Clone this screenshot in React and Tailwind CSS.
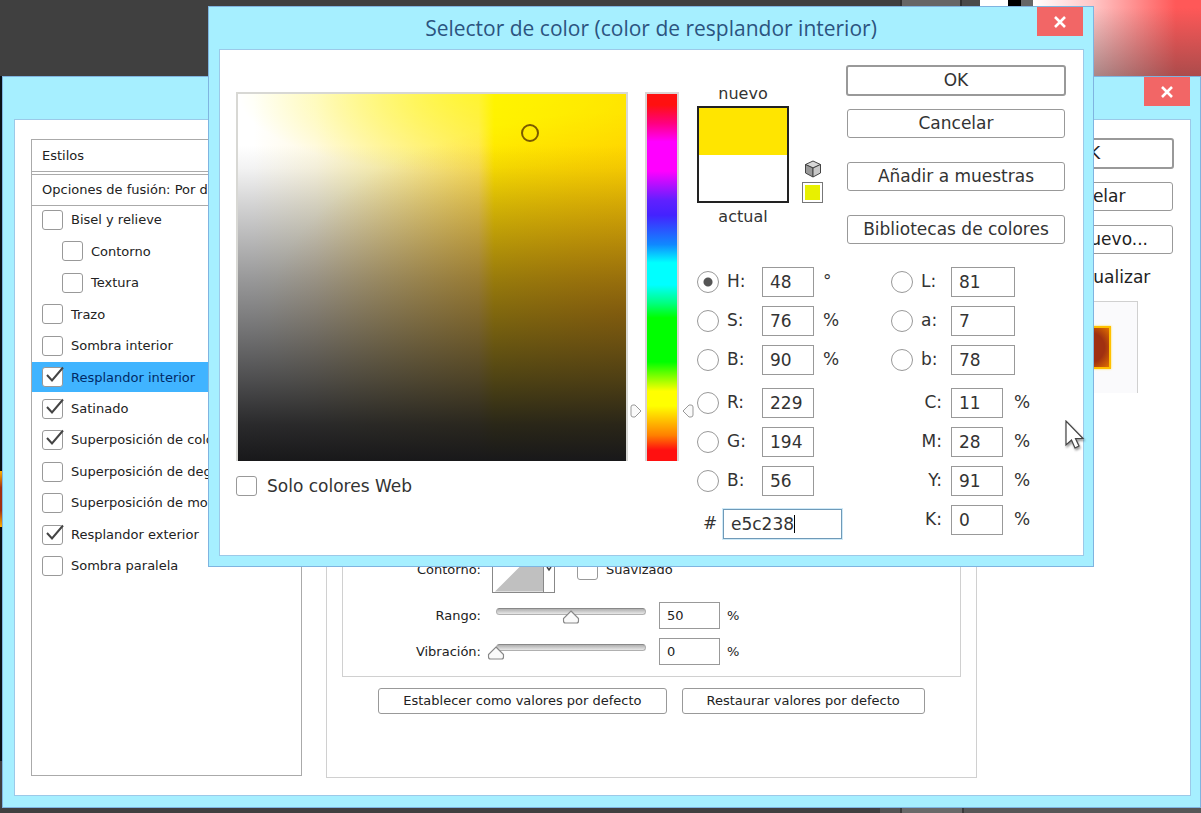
import { useState } from "react"

const STYLES = [
  { name: "Bisel y relieve" },
  { name: "Contorno", nested: true },
  { name: "Textura", nested: true },
  { name: "Trazo" },
  { name: "Sombra interior" },
  { name: "Resplandor interior", on: true, selected: true },
  { name: "Satinado", on: true },
  { name: "Superposición de colores", on: true },
  { name: "Superposición de degradado" },
  { name: "Superposición de motivo" },
  { name: "Resplandor exterior", on: true },
  { name: "Sombra paralela" },
]

const HSB = [
  { id: "hue", label: "H:", value: "48", unit: "°" },
  { id: "sat", label: "S:", value: "76", unit: "%" },
  { id: "bri", label: "B:", value: "90", unit: "%" },
]
const RGB = [
  { id: "red", label: "R:", value: "229" },
  { id: "green", label: "G:", value: "194" },
  { id: "blue", label: "B:", value: "56" },
]
const LAB = [
  { id: "lab-l", label: "L:", value: "81" },
  { id: "lab-a", label: "a:", value: "7" },
  { id: "lab-b", label: "b:", value: "78" },
]
const CMYK = [
  { id: "cyan", label: "C:", value: "11" },
  { id: "magenta", label: "M:", value: "28" },
  { id: "yellow", label: "Y:", value: "91" },
  { id: "black", label: "K:", value: "0" },
]

function Check({ defaultChecked = false, ...props }) {
  return (
    <span className="relative block h-5 w-[21px] shrink-0">
      <input
        type="checkbox"
        defaultChecked={defaultChecked}
        className="peer block h-5 w-[21px] appearance-none rounded-[3px] border border-[#999] bg-white"
        {...props}
      />
      <svg viewBox="0 0 24 22" className="pointer-events-none absolute -top-px left-0 hidden h-[22px] w-6 peer-checked:block" aria-hidden="true">
        <path d="M5 9 L10 14.500 L21 1.500" fill="none" stroke="#444" strokeWidth="2" />
      </svg>
    </span>
  )
}

function CloseButton() {
  return (
    <button type="button" aria-label="Cerrar" className="flex h-[29px] w-[46px] shrink-0 items-center justify-center bg-[#f26666]">
      <svg viewBox="0 0 14 12" className="h-3 w-3.5" aria-hidden="true">
        <path d="M2 1 L12 11 M12 1 L2 11" stroke="#fff" strokeWidth="2.6" />
      </svg>
    </button>
  )
}

function DialogButton({ children, primary = false }) {
  return (
    <button
      type="button"
      className={
        primary
          ? "h-[31px] w-full rounded-[3px] border-2 border-[#999] bg-white"
          : "mx-px h-[29px] rounded-[3px] border border-[#999] bg-white"
      }
    >
      {children}
    </button>
  )
}

// Colour component with the radio that picks the axis of the field
function RadioField({ id, label, value, unit, wide, checked }) {
  return (
    <div className="flex h-[30px] items-center">
      <input
        type="radio"
        name="axis"
        id={id + "-axis"}
        defaultChecked={checked}
        className="size-[22px] appearance-none rounded-full border border-[#999] bg-white checked:bg-[radial-gradient(circle,#555_4px,transparent_5px)]"
      />
      <label htmlFor={id + "-axis"} className={wide ? "w-[38px] pl-2" : "w-[43px] pl-2"}>{label}</label>
      <input
        id={id}
        aria-label={label}
        defaultValue={value}
        className={wide ? "h-[30px] w-16 border border-[#999] bg-white px-[7px]" : "h-[30px] w-[52px] border border-[#999] bg-white px-[7px]"}
      />
      {unit && <span className="pl-[9px]">{unit}</span>}
    </div>
  )
}

function Slider({ label, id, initial }) {
  const [value, setValue] = useState(initial)
  return (
    <div className="flex h-[27px] items-center">
      <label htmlFor={id} className="w-[138px] text-right">{label}</label>
      <div className="relative ml-[15px] h-[15px] w-[150px]">
        <div className="h-[7px] rounded-full border border-[#b0b0b0] border-t-[#888] bg-[linear-gradient(#b0b0b0,#e8e8e8)]" />
        <svg
          viewBox="0 0 17 14"
          className="absolute top-[2px] h-3.5 w-[17px] -translate-x-1/2"
          style={{ left: value + "%" }}
          aria-hidden="true"
        >
          <path d="M8.5 1 L16 8.5 V11 Q16 13 14 13 H3 Q1 13 1 11 V8.5 Z" fill="#fafafa" stroke="#888" strokeWidth="1.2" />
        </svg>
        <input
          id={id}
          type="range"
          min="0"
          max="100"
          value={value}
          onChange={(e) => setValue(Number(e.target.value))}
          className="absolute inset-0 w-full opacity-0"
        />
      </div>
      <input
        aria-label={label}
        value={value}
        onChange={(e) => setValue(Number(e.target.value) || 0)}
        className="ml-[13px] h-[27px] w-[61px] border border-[#999] bg-white px-[7px]"
      />
      <span className="pl-[7px]">%</span>
    </div>
  )
}

// What can be seen of the editor behind the dialogs
function Workspace() {
  return (
    <div className="absolute inset-0 flex flex-col justify-between bg-[#404040]" aria-hidden="true">
      <div className="flex h-[76px] justify-end">
        <div className="w-[62px] border-x-2 border-[#303030] bg-[#666]" />
        <div className="w-[18px] bg-[#4a4a4a]" />
        <div className="w-7 bg-white" />
        <div className="w-[13px] bg-black" />
        <div className="w-3 bg-[#666]" />
        <div className="w-[168px] bg-[linear-gradient(to_bottom,transparent_10%,rgba(70,60,60,0.45)),linear-gradient(to_right,#fff,#ffc8c8_35%,#ff5858_85%)]" />
      </div>
      <div className="flex w-[3px] flex-1 flex-col justify-center bg-[#0a1218] pt-[160px]">
        <div className="h-[56px] bg-[linear-gradient(to_bottom,#ffb000,#a03010_30%,#a03010_70%,#ffb000)]" />
      </div>
      <div className="flex h-[52px] items-end justify-end">
        <div className="h-[5px] w-5 bg-[#555]" />
        <div className="h-[5px] w-16 border-x-2 border-[#3a3a3a] bg-[#6a6a6a]" />
        <div className="h-[5px] w-[237px] bg-[#575757]" />
      </div>
    </div>
  )
}

function LayerStyleWindow() {
  return (
    <section className="absolute top-[76px] right-0 bottom-[5px] left-[2px] flex flex-col border border-[#7fb4e0] bg-[#a6efff] pr-[9px] pb-[11px] pl-[11px] font-['DejaVu_Sans',Verdana,sans-serif] text-[13px] text-[#222]">
      <header className="mr-px flex h-[42px] shrink-0 justify-end">
        <CloseButton />
      </header>
      <div className="flex flex-1 border border-[#9cc9e8] bg-white pt-[19px] pr-4 pb-[17px] pl-4">
        <div className="mb-[2px] w-[271px] border border-[#aaa]">
          <h2 className="flex h-8 items-center border-b border-[#aaa] pl-[10px]">Estilos</h2>
          <h3 className="mt-0.5 flex h-8 items-center border-y border-[#aaa] pl-[10px] whitespace-nowrap">Opciones de fusión: Por defecto</h3>
          <ul className="-mt-px flex h-[376px] flex-col justify-between">
            {STYLES.map((s) => (
              <li key={s.name} className={s.selected ? "bg-[#40b4ff] text-[#002a66]" : undefined}>
                <label className={s.nested ? "flex h-[30px] items-center gap-2 pl-[30px] whitespace-nowrap" : "flex h-[30px] items-center gap-2 pl-[10px] whitespace-nowrap"}>
                  <Check defaultChecked={s.on} />
                  {s.name}
                </label>
              </li>
            ))}
          </ul>
        </div>

        <div className="ml-6 flex flex-1 flex-col justify-end border border-[#d0d0d0] px-[15px] pb-[63px]">
          <div className="flex flex-1 flex-col justify-end gap-[9px] border border-[#d0d0d0] pb-[11px]">
            <div className="flex h-[47px] items-center">
              <span className="w-[138px] text-right">Contorno:</span>
              <button type="button" aria-label="Contorno" className="ml-[11px] flex h-[47px] w-[63px] border border-[#888] bg-white">
                <svg viewBox="0 0 51 45" className="h-full w-[51px] border-r border-[#888]" aria-hidden="true">
                  <path d="M2 45 L47 0 H51 V45 Z" fill="#c0c0c0" />
                </svg>
                <svg viewBox="0 0 10 45" className="h-full flex-1" aria-hidden="true">
                  <path d="M3 20 L5 23 L7 20" fill="none" stroke="#444" strokeWidth="1.5" />
                </svg>
              </button>
              <label className="ml-[22px] flex items-center gap-2">
                <Check />
                Suavizado
              </label>
            </div>
            <Slider id="range" label="Rango:" initial={50} />
            <Slider id="jitter" label="Vibración:" initial={0} />
          </div>
          <div className="mt-[11px] flex justify-center gap-[15px]">
            <button type="button" className="h-[26px] rounded-[3px] border border-[#999] bg-white px-6">Establecer como valores por defecto</button>
            <button type="button" className="h-[26px] rounded-[3px] border border-[#999] bg-white px-6">Restaurar valores por defecto</button>
          </div>
        </div>

        <div className="-mt-px ml-[25px] flex w-[172px] flex-col text-[17px]">
          <DialogButton primary>OK</DialogButton>
          <div className="mt-[13px] flex flex-col gap-3.5">
            <DialogButton>Cancelar</DialogButton>
            <DialogButton>Estilo nuevo...</DialogButton>
          </div>
          <label className="mt-[11px] flex items-center gap-2 self-center pr-3 leading-6">
            <Check defaultChecked />
            Previsualizar
          </label>
          <div className="mt-3 mr-9 flex h-[92px] w-[92px] items-center justify-center self-end border border-b-0 border-[#d0d0d0] bg-[#fafafc]">
            <div className="mr-1.5 h-[43px] w-11 border-2 border-[#ffc000] bg-[radial-gradient(#a03010_55%,#e07000)] shadow-[0_0_2px_#ffd840]" />
          </div>
        </div>
      </div>
    </section>
  )
}

function HueMarker({ flip }) {
  return (
    <svg viewBox="0 0 12 14" className={flip ? "mt-[312px] h-3.5 w-3 -scale-x-100" : "mt-[312px] h-3.5 w-3"} aria-hidden="true">
      <path d="M1 3 Q1 1 3 1 H5 L11 7 L5 13 H3 Q1 13 1 11 Z" fill="#fafafa" stroke="#999" />
    </svg>
  )
}

function HueBar() {
  return (
    <div className="relative mt-[42px] flex gap-[3px] pr-[3px] pl-[2px]">
      <HueMarker />
      <div className="h-[369px] w-[34px] border-2 border-b-0 border-[#dcd4d4] bg-[linear-gradient(to_bottom,#ff1010_3%,#ff0080_8%,#ff00ff_13%,#ff00ff_21%,#6020ff_29%,#4422ff_33%,#1088ff_41%,#00ffff_46%,#00ffff_52%,#00ff80_57%,#00ff00_61%,#00ff00_73%,#80ff00_77%,#ffff00_81%,#ffff00_85%,#ff8000_93%,#ff1010_97%)]" />
      <HueMarker flip />
      <input type="range" aria-label="Tono" min="0" max="360" defaultValue="48" className="absolute inset-0 h-full w-full opacity-0" />
    </div>
  )
}

function Swatches() {
  return (
    <div className="flex w-[92px] flex-col pt-4 text-center text-[16px]">
      <div className="leading-[25px]">nuevo</div>
      <div className="h-[97px] border-2 border-[#222]">
        <div className="h-[47px] bg-[#ffe500]" />
      </div>
      <div className="leading-[28px]">actual</div>
    </div>
  )
}

function ColorPicker() {
  return (
    <section className="absolute top-[6px] right-[107px] left-[208px] border border-[#7fb4e0] bg-[#a6efff] pr-[9px] pb-[10px] pl-[10px] font-['DejaVu_Sans',Verdana,sans-serif] text-[17px] text-[#333]">
      <header className="mr-px flex h-[42px] items-start">
        <h1 className="flex-1 pl-[46px] text-center font-['Open_Sans','Noto_Sans',sans-serif] text-[21px] leading-[42px] whitespace-nowrap text-[#2c5480]">
          Selector de color (color de resplandor interior)
        </h1>
        <CloseButton />
      </header>
      <div className="flex border border-[#9cc9e8] bg-white pr-[17px] pb-4 pl-4">
        <div className="flex-1 pt-[42px]">
          {/* darkness, orange cast on the right, bright yellow along the top, then saturation */}
          <div className="relative h-[369px] border-2 border-b-0 border-[#d8d8d4] bg-[linear-gradient(to_bottom,transparent_14%,rgba(24,24,26,0.05)_20%,rgba(24,24,26,0.19)_30%,rgba(24,24,26,0.44)_50%,rgba(24,24,26,0.6)_64%,rgba(24,24,26,0.77)_78%,rgba(24,24,26,0.92)_90%,#18181a),radial-gradient(ellipse_at_100%_60%,rgba(255,110,0,0.45),transparent_65%),radial-gradient(ellipse_60%_22%_at_60%_0%,rgba(255,255,0,0.5),transparent),linear-gradient(to_right,#fff_4%,#fffae4_20%,#fff2a0_42%,#ffea60_62%,#ffec00_66%,#ffe000)]">
            <span className="absolute top-[30px] left-[283px] size-[18px] rounded-full border-2 border-[#7a5a00]" />
          </div>
          <label className="mt-[15px] flex items-center gap-[10px]">
            <Check />
            <span className="leading-5">Solo colores Web</span>
          </label>
        </div>

        <HueBar />

        <div className="flex flex-col pt-[15px]">
          <div className="flex">
            <Swatches />
            <div className="ml-3 flex w-[23px] flex-col items-center gap-1 pt-[95px]">
              <svg viewBox="0 0 18 18" className="size-[18px]" aria-hidden="true">
                <path d="M9 1 L16.500 4.500 L9 8 L1.500 4.500 Z" fill="#d8d8d8" stroke="#444" strokeLinejoin="round" />
                <path d="M1.500 4.500 L9 8 V17 L1.500 13 Z" fill="#999" stroke="#444" strokeLinejoin="round" />
                <path d="M16.500 4.500 L9 8 V17 L16.500 13 Z" fill="#c8c8c8" stroke="#444" strokeLinejoin="round" />
              </svg>
              <button type="button" aria-label="Color seguro para Web" className="size-[21px] border border-[#777] bg-white p-[2px]">
                <span className="block size-full bg-[#e8f000]" />
              </button>
            </div>
            <div className="ml-[22px] flex w-[220px] flex-col">
              <DialogButton primary>OK</DialogButton>
              <div className="mt-[13px] flex flex-col gap-6">
                <DialogButton>Cancelar</DialogButton>
                <DialogButton>Añadir a muestras</DialogButton>
                <DialogButton>Bibliotecas de colores</DialogButton>
              </div>
            </div>
          </div>

          <div className="mt-[23px] flex gap-[49px]">
            <div className="flex w-[145px] flex-col gap-[13px]">
              <div className="flex flex-col gap-[9px]">
                {HSB.map((f) => <RadioField key={f.id} {...f} checked={f.id === "hue"} />)}
              </div>
              <div className="flex flex-col gap-[9px]">
                {RGB.map((f) => <RadioField key={f.id} {...f} />)}
              </div>
              <div className="flex h-[30px] items-center">
                <label htmlFor="hex" className="w-[26px] text-center">#</label>
                <div className="relative flex-1">
                  <input id="hex" defaultValue="e5c238" className="h-[30px] w-full border border-[#6f9ab8] bg-white px-[7px] shadow-[0_0_0_1px_#cfeaf8]" />
                  <span className="absolute top-[6px] left-[71px] h-[18px] w-px bg-black" />
                </div>
              </div>
            </div>
            <div className="flex flex-col gap-[13px]">
              <div className="flex flex-col gap-[9px]">
                {LAB.map((f) => <RadioField key={f.id} {...f} wide />)}
              </div>
              <div className="flex flex-col gap-[9px]">
                {CMYK.map((f) => (
                  <div key={f.id} className="flex h-[30px] items-center">
                    <label htmlFor={f.id} className="w-[60px] pr-[9px] text-right">{f.label}</label>
                    <input id={f.id} defaultValue={f.value} className="h-[30px] w-[52px] border border-[#999] bg-white px-[7px]" />
                    <span className="pl-[11px]">%</span>
                  </div>
                ))}
              </div>
            </div>
          </div>
        </div>
      </div>
    </section>
  )
}

export default function App() {
  return (
    <main className="relative h-screen min-h-[700px] overflow-hidden">
      <Workspace />
      <LayerStyleWindow />
      <ColorPicker />
      <svg viewBox="0 0 20 30" className="pointer-events-none absolute top-[420px] left-[1065px] h-[30px] w-5 drop-shadow-[1px_2px_1px_rgba(0,0,0,0.4)]" aria-hidden="true">
        <path d="M1 1 V25 L6.500 20 L10 28 L14 26 L10.500 18.500 H18 Z" fill="#fff" stroke="#444" strokeWidth="1.2" />
      </svg>
    </main>
  )
}
